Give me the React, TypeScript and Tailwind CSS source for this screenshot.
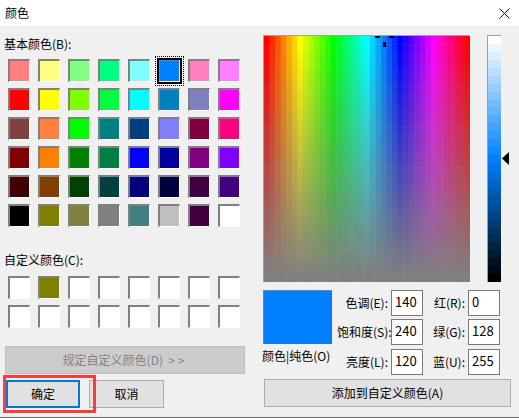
const FONT = "font-['Microsoft_YaHei_UI','Noto_Sans_CJK_SC',sans-serif]";

const BASIC = [
  '#ff8080', '#ffff80', '#80ff80', '#00ff80', '#80ffff', '#0080ff', '#ff80c0', '#ff80ff',
  '#ff0000', '#ffff00', '#80ff00', '#00ff40', '#00ffff', '#0080c0', '#8080c0', '#ff00ff',
  '#804040', '#ff8040', '#00ff00', '#008080', '#004080', '#8080ff', '#800040', '#ff0080',
  '#800000', '#ff8000', '#008000', '#008040', '#0000ff', '#0000a0', '#800080', '#8000ff',
  '#400000', '#804000', '#004000', '#004040', '#000080', '#000040', '#400040', '#400080',
  '#000000', '#808000', '#808040', '#808080', '#408080', '#c0c0c0', '#400040', '#ffffff',
];

const CUSTOM = Array.from({ length: 16 }, (_, i) => (i === 1 ? '#808000' : '#ffffff'));

const SELECTED = 5;

function Swatch({ color, selected }: { color: string; selected?: boolean }) {
  return (
    <div className="relative h-[23px] w-[22px] border-t-2 border-r border-b border-l-2 border-t-[#808080] border-r-white border-b-white border-l-[#808080]">
      <div className="h-full w-full" style={{ backgroundColor: color }} />
      {selected && (
        <div className="absolute -top-[3px] -left-[3px] -right-[3px] -bottom-[3px] border-2 border-black outline-1 outline-offset-1 outline-dotted outline-black" />
      )}
    </div>
  );
}

function Spectrum() {
  const cols = 37;
  const rows = 30;
  const w = 206 / cols;
  const h = 246 / rows;
  const rects = [];
  for (let r = 0; r < rows; r++) {
    for (let c = 0; c < cols; c++) {
      const hue = (c / (cols - 1)) * 360;
      const sat = 100 - (r / (rows - 1)) * 100;
      rects.push(
        <rect
          key={`${r}-${c}`}
          x={c * w}
          y={r * h}
          width={w + 0.5}
          height={h + 0.5}
          fill={`hsl(${hue}, ${sat}%, 50%)`}
        />,
      );
    }
  }
  return (
    <div className="relative h-[247px] w-[207px] border-t border-l border-t-[#a0a0a0] border-l-[#a0a0a0]">
      <svg width="206" height="246" className="block">
        {rects}
        <rect x="111" y="0" width="5" height="2" fill="#000" />
        <rect x="125" y="0" width="5" height="2" fill="#000" />
        <rect x="119" y="6" width="3" height="5" fill="#000" />
      </svg>
    </div>
  );
}

function LumBar() {
  const rows = 31;
  return (
    <div className="flex h-[247px] w-[14px] flex-col border-t border-l border-t-[#a0a0a0] border-l-[#a0a0a0]">
      {Array.from({ length: rows }, (_, i) => (
        <div
          key={i}
          className="w-full flex-1"
          style={{ backgroundColor: `hsl(210, 100%, ${100 - (i / (rows - 1)) * 100}%)` }}
        />
      ))}
    </div>
  );
}

function Field({ label, value, labelW }: { label: string; value: string; labelW: string }) {
  return (
    <div className="flex items-center">
      <span className={`${labelW} text-right whitespace-nowrap`}>{label}</span>
      <div className="ml-[3px] h-[26px] w-[32px] border border-[#7a7a7a] bg-white pl-[3px] text-[13px] leading-[22px]">
        {value}
      </div>
    </div>
  );
}

export default function App() {
  return (
    <div className={`${FONT} flex h-[418px] w-[519px] flex-col overflow-hidden bg-[#f0f0f0] text-[12px] text-black`}>
      {/* Title bar */}
      <div className="flex h-[26px] items-center justify-between bg-white pl-[5px] pr-[9px]">
        <span className="text-[12px]">颜色</span>
        <svg width="11" height="11" viewBox="0 0 11 11" className="mt-[1px]">
          <path d="M0.5 0.5 L10.5 10.5 M10.5 0.5 L0.5 10.5" stroke="#111" strokeWidth="1" fill="none" />
        </svg>
      </div>

      <div className="flex flex-1">
        {/* Left column */}
        <div className="w-[263px] pl-[4px]">
          <div className="mt-[10px] h-[18px] leading-[16px]">基本颜色(B):</div>
          <div className="mt-[5px] ml-[4px] grid w-[232px] grid-cols-8 gap-x-[8px] gap-y-[6px]">
            {BASIC.map((c, i) => (
              <Swatch key={i} color={c} selected={i === SELECTED} />
            ))}
          </div>
          <div className="mt-[25px] h-[18px] leading-[16px]">自定义颜色(C):</div>
          <div className="mt-[6px] ml-[4px] grid w-[232px] grid-cols-8 gap-x-[8px] gap-y-[6px]">
            {CUSTOM.map((c, i) => (
              <Swatch key={i} color={c} />
            ))}
          </div>
          <div className="mt-[18px] ml-[1px] flex h-[28px] w-[240px] items-center justify-center border border-[#bfbfbf] bg-[#cccccc] pr-[3px] text-[#838383]">
            规定自定义颜色(D)&nbsp;&nbsp;&gt; &gt;
          </div>
          <div className="mt-[6px] flex gap-[9px]">
            <div className="relative ml-[2px] flex h-[28px] w-[74px] items-center justify-center border-2 border-[#0078d7] bg-[#e1e1e1]">
              确定
              <div className="absolute -top-[7px] -left-[5px] h-[38px] w-[93px] border-[3px] border-[#ff3b3b]" />
            </div>
            <div className="flex h-[28px] w-[75px] items-center justify-center border border-[#adadad] bg-[#e1e1e1]">
              取消
            </div>
          </div>
        </div>

        {/* Right column */}
        <div className="flex-1">
          <div className="mt-[9px] flex">
            <Spectrum />
            <div className="ml-[17px]">
              <LumBar />
            </div>
            <svg width="7" height="13" viewBox="0 0 7 13" className="mt-[117px] ml-[1px]">
              <path d="M0 6.5 L7 0 L7 13 Z" fill="#000" />
            </svg>
          </div>
          <div className="mt-[8px] flex">
            <div className="w-[74px]">
              <div className="h-[54px] w-[69px] border-t border-l border-t-[#808080] border-l-[#808080] bg-[#0080ff]" />
              <div className="mt-[3px] -ml-[1px] text-[12px] leading-[18px] whitespace-nowrap">颜色|纯色(O)</div>
            </div>
            <div className="flex flex-col">
              <Field label="色调(E):" value="140" labelW="w-[51px]" />
              <div className="mt-[3px]">
                <Field label="饱和度(S):" value="240" labelW="w-[51px]" />
              </div>
              <div className="mt-[4px]">
                <Field label="亮度(L):" value="120" labelW="w-[51px]" />
              </div>
            </div>
            <div className="flex flex-col">
              <Field label="红(R):" value="0" labelW="w-[42px]" />
              <div className="mt-[3px]">
                <Field label="绿(G):" value="128" labelW="w-[42px]" />
              </div>
              <div className="mt-[4px]">
                <Field label="蓝(U):" value="255" labelW="w-[42px]" />
              </div>
            </div>
          </div>
          <div className="mt-[4px] ml-[1px] flex h-[28px] w-[247px] items-center justify-center border border-[#adadad] bg-[#e1e1e1]">
            添加到自定义颜色(A)
          </div>
        </div>
      </div>
      <div className="h-[1px] bg-[#6b6b6b]" />
    </div>
  );
}
